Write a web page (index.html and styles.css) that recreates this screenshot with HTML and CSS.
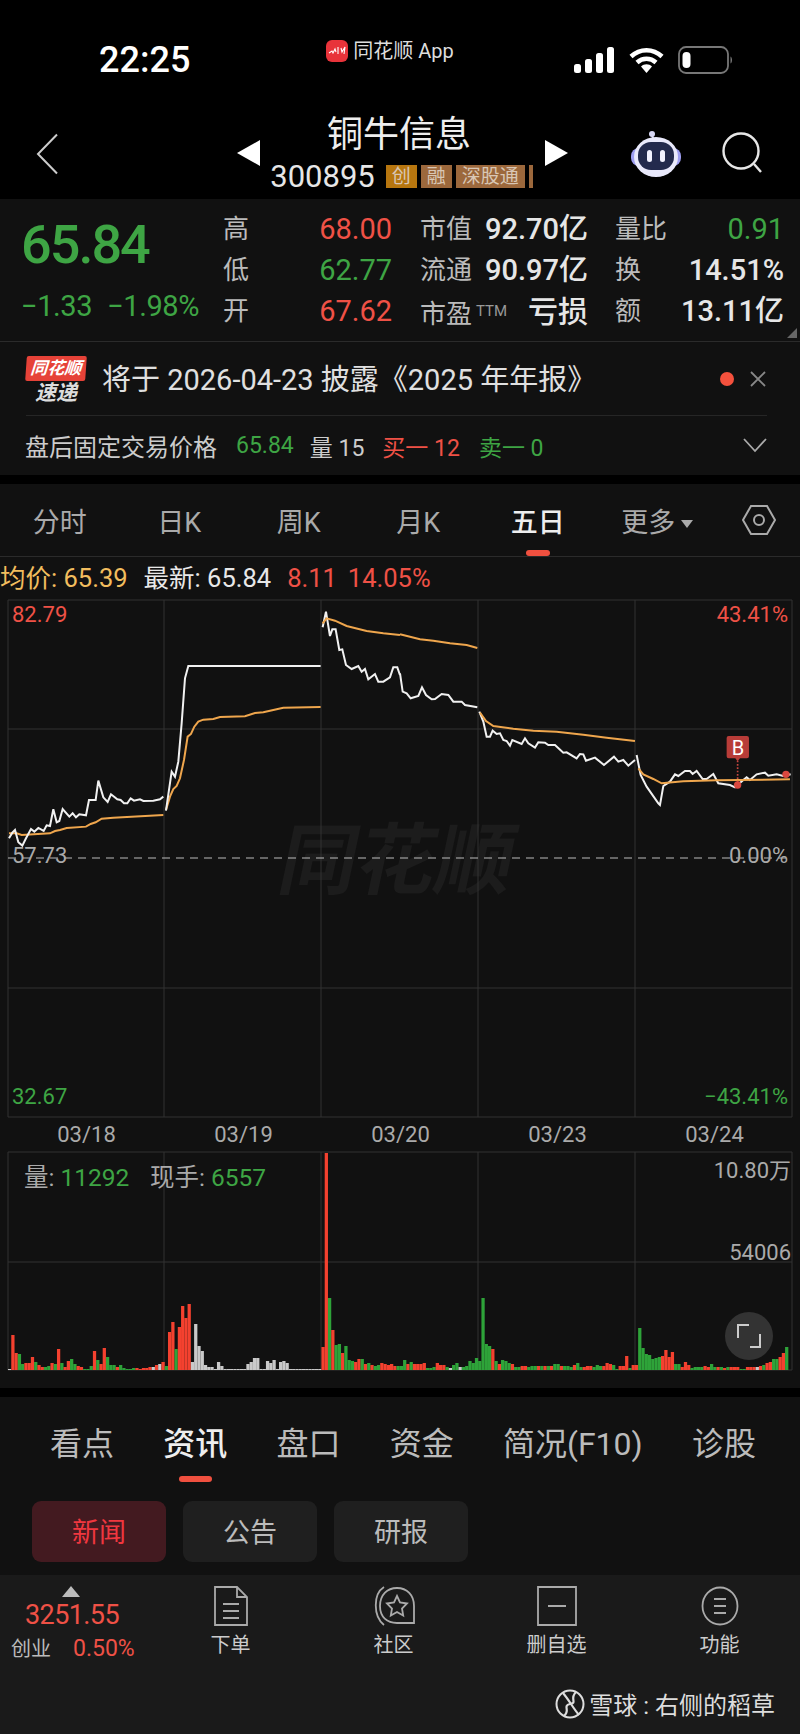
FILE: index.html
```html
<!DOCTYPE html>
<html>
	<head>
		<meta charset="UTF-8">
		<title>铜牛信息</title>
		<link rel="stylesheet" href="styles.css">
	</head>
	<body>
		<div class="phone">
			<div class="status">
				<div class="time">22:25</div>
				<div class="app_name">
					<svg class="app_logo" viewBox="0 0 22 22"><rect width="22" height="22" rx="6" fill="#e8333a"/><path d="M3 13l3-2 1 2 2-4 1 3M12 7v7M15 8l1 4 3-5-1 7" fill="none" stroke="#fff" stroke-width="1.1"/></svg>
					<span>同花顺 App</span>
				</div>
				<div class="status_icons">
					<svg width="40" height="26" viewBox="0 0 40 26"><rect x="0" y="17" width="7" height="9" rx="2.5" fill="#fff"/><rect x="11" y="12" width="7" height="14" rx="2.5" fill="#fff"/><rect x="22" y="6" width="7" height="20" rx="2.5" fill="#fff"/><rect x="33" y="0" width="7" height="26" rx="2.5" fill="#fff"/></svg>
					<svg class="wifi" width="35" height="26" viewBox="0 0 35 26"><path d="M2 9.5C11 1 24 1 33 9.500M8 15.500C13.500 10.500 21.500 10.500 27 15.500" fill="none" stroke="#fff" stroke-width="4.500"/><path d="M12 19.500C15 16.500 20 16.500 23 19.500L17.500 26z" fill="#fff"/></svg>
					<svg class="battery" width="55" height="28" viewBox="0 0 55 28"><rect x="1" y="1" width="49" height="26" rx="7" fill="none" stroke="#777" stroke-width="1.800"/><rect x="4.500" y="6" width="8" height="16" rx="4" fill="#fff"/><path d="M52.500 10.500c2 1 2 6 0 7z" fill="#777"/></svg>
				</div>
			</div>
			<div class="header">
				<svg class="back" width="23" height="42" viewBox="0 0 23 42"><path d="M21 1.500L2 21l19 19.500" fill="none" stroke="#ccc" stroke-width="2"/></svg>
				<div class="stock_box">
					<div class="arrow arrow_left"></div>
					<div class="stock_info">
						<h1>铜牛信息</h1>
						<div class="stock_code">
							<span class="code">300895</span>
							<span class="tag tag_gold">创</span>
							<span class="tag">融</span>
							<span class="tag">深股通</span>
							<span class="tag tag_cut"></span>
						</div>
					</div>
					<div class="arrow arrow_right"></div>
				</div>
				<svg class="robot" width="52" height="48" viewBox="0 0 52 48"><circle cx="22" cy="4" r="3" fill="#d8d8f5"/><path d="M22 6l3 5" stroke="#d8d8f5" stroke-width="2"/><rect x="1" y="18" width="50" height="18" rx="8" fill="#9d9df0"/><ellipse cx="26" cy="27" rx="22" ry="20" fill="#e9e9fb"/><rect x="8" y="12" width="36" height="28" rx="13" fill="#232a4d"/><rect x="17" y="20" width="5" height="12" rx="2.500" fill="#f2f2ff"/><rect x="30" y="20" width="5" height="12" rx="2.500" fill="#f2f2ff"/></svg>
				<svg class="search" width="42" height="42" viewBox="0 0 42 42"><circle cx="20" cy="19" r="17.500" fill="none" stroke="#e6e6e6" stroke-width="2.400"/><path d="M33 32l7 8" stroke="#e6e6e6" stroke-width="2.400"/></svg>
			</div>

			<div class="panel">
				<div class="quote">
					<div class="price_box">
						<div class="price green">65.84</div>
						<div class="change green"><span>−1.33</span><span>−1.98%</span></div>
					</div>
					<div class="quote_grid">
						<span class="q_label">高</span><span class="q_val red">68.00</span>
						<span class="q_label">市值</span><span class="q_val light">92.70亿</span>
						<span class="q_label">量比</span><span class="q_val green">0.91</span>
						<span class="q_label">低</span><span class="q_val green">62.77</span>
						<span class="q_label">流通</span><span class="q_val light">90.97亿</span>
						<span class="q_label">换</span><span class="q_val light">14.51%</span>
						<span class="q_label">开</span><span class="q_val red">67.62</span>
						<span class="q_label">市盈<em>TTM</em></span><span class="q_val light loss">亏损</span>
						<span class="q_label">额</span><span class="q_val light">13.11亿</span>
					</div>
					<div class="corner"></div>
				</div>
				<div class="notice">
					<div class="flash">
						<div class="flash_top">同花顺</div>
						<div class="flash_bottom">速递</div>
					</div>
					<div class="notice_text">将于 2026-04-23 披露《2025 年年报》</div>
					<div class="dot"></div>
					<svg class="close" width="16" height="16" viewBox="0 0 16 16"><path d="M1 1l14 14M15 1L1 15" stroke="#888" stroke-width="1.800"/></svg>
				</div>
				<div class="after_hours">
					<span class="ah_title">盘后固定交易价格</span>
					<span class="green ah_price">65.84</span>
					<span class="ah_vol">量 15</span>
					<span class="red ah_buy">买一 12</span>
					<span class="green">卖一 0</span>
					<svg class="ah_more" width="24" height="15" viewBox="0 0 24 15"><path d="M1 1l11 12L23 1" fill="none" stroke="#aaa" stroke-width="1.800"/></svg>
				</div>
			</div>

			<div class="panel chart_panel">
				<div class="period_tabs">
					<span>分时</span>
					<span>日K</span>
					<span>周K</span>
					<span>月K</span>
					<span class="active_tab">五日</span>
					<span class="more">更多<i></i></span>
					<svg class="hex" width="36" height="32" viewBox="0 0 36 32"><path d="M10 2h16l8 14-8 14H10L2 16z" fill="none" stroke="#aaa" stroke-width="2"/><circle cx="18" cy="16" r="5" fill="none" stroke="#aaa" stroke-width="2"/></svg>
				</div>
				<div class="price_line">
					<span class="orange">均价: 65.39</span>
					<span class="white_text">最新: 65.84</span>
					<span class="red">8.11</span>
					<span class="red pct">14.05%</span>
				</div>

				<svg class="price_chart" width="800" height="524" viewBox="0 596 800 524">
					<text class="mark" x="276" y="888" transform="skewX(-12) translate(188 0)">同花顺</text>
					<path class="grid" d="M8 600H792V1117H8zM164 600V1117M321 600V1117M478 600V1117M635 600V1117M8 729H792M8 988H792"/>
					<path class="dash" d="M8 858H792"/>
					<g transform="translate(0 590) scale(.3333)">
						<polyline class="avg" points="27,730 50,730 65,735 150,730 165,723 180,720 200,714 258,710 272,702 287,697 305,686 340,683 490,675"/>
						<polyline class="avg" points="498,660 510,620 520,597 530,588 540,565 552,510 563,440 573,432 583,410 595,395 610,389 640,387 660,381 735,379 765,369 790,367 820,360 850,353 962,351"/>
						<polyline class="line" points="27,745 37,728 45,720 55,757 67,767 78,745 93,717 103,725 115,714 131,723 140,706 150,708 160,658 170,697 178,693 188,657 208,680 218,670 228,682 238,673 258,676 267,630 287,630 295,572 310,622 323,636 333,613 352,628 362,630 372,640 382,640 392,625 402,632 420,628 430,633 460,632 480,628 490,620"/>
						<polyline class="line" points="498,662 515,545 525,560 535,515 545,400 555,265 565,228 962,228"/>
						<polyline class="line" points="968,112 978,65 990,138 997,118 1007,118 1018,180 1027,178 1038,225 1055,237 1075,228 1085,245 1095,237 1105,268 1125,252 1135,275 1150,275 1170,262 1180,232 1192,232 1200,255"/>
						<polyline class="avg" points="968,100 980,85 1005,92 1040,108 1100,123 1150,130 1200,135"/>
					</g>
					<g transform="translate(400 590) scale(.3333)">
						<polyline class="line" points="0,250 8,305 20,310 32,325 55,318 66,292 78,315 95,328 105,327 125,312 145,315 160,335 185,335 195,345 232,352"/>
						<polyline class="avg" points="0,133 60,148 100,152 150,160 200,165 232,174"/>
						<polyline class="line" points="238,365 250,395 260,440 270,440 278,422 290,432 300,430 310,450 320,453 330,467 337,450 365,462 375,445 385,460 405,473 415,457 435,458 445,465 465,465 490,488 500,487 530,505 540,492 550,493 558,512 585,503 612,525 642,500 655,515 670,510 685,527 705,510"/>
						<polyline class="avg" points="240,368 258,393 280,408 340,416 400,422 470,425 550,434 620,443 705,453"/>
						<polyline class="line" points="710,495 722,555 740,590 775,640 780,645 790,588 810,575 825,553 835,558 855,543 870,543 878,552 890,543 908,567 920,567 940,552 955,580 990,585 1005,592 1030,570 1040,562 1050,570 1070,553 1095,548 1105,557 1130,553 1150,558 1172,553"/>
						<polyline class="avg" points="715,535 730,553 760,567 785,580 850,574 950,571 1170,568"/>
						<path class="trade_link" d="M1013 512V580"/>
						<circle class="trade_dot" cx="1013" cy="585" r="11"/>
						<circle class="trade_dot" cx="1158" cy="553" r="11"/>
						<path class="trade_flag" d="M986 438H1041a6 6 0 0 1 6 6V499a6 6 0 0 1-6 6H1020L1013 514 1006 505H986a6 6 0 0 1-6-6V444a6 6 0 0 1 6-6z"/>
					</g>
					<text class="flag_text" x="738" y="755">B</text>
					<text class="axis red_fill" x="12" y="622">82.79</text>
					<text class="axis end red_fill" x="788" y="622">43.41%</text>
					<text class="axis gray_fill" x="12" y="863">57.73</text>
					<text class="axis end gray_fill" x="788" y="863">0.00%</text>
					<text class="axis green_fill" x="12" y="1104">32.67</text>
					<text class="axis end green_fill" x="788" y="1104">−43.41%</text>
				</svg>

				<div class="dates">
					<span>03/18</span>
					<span>03/19</span>
					<span>03/20</span>
					<span>03/23</span>
					<span>03/24</span>
				</div>

				<svg class="vol_chart" width="800" height="224" viewBox="0 1150 800 224">
					<path class="grid" d="M8 1152H792V1370H8zM164 1152V1370M321 1152V1370M478 1152V1370M635 1152V1370M8 1262H792"/>
					<g id="vol_bars"></g>
					<text class="axis vol_text gray_fill" x="24" y="1186">量: <tspan class="green_fill">11292</tspan></text>
					<text class="axis vol_text gray_fill" x="150" y="1186">现手: <tspan class="green_fill">6557</tspan></text>
					<text class="axis end gray_fill" x="791" y="1178">10.80万</text>
					<text class="axis end gray_fill" x="791" y="1260">54006</text>
					<circle cx="749" cy="1336" r="24" fill="#333"/>
					<path class="expand" d="M738 1338V1325H749M760 1334V1347H750"/>
				</svg>
			</div>

			<div class="panel news_panel">
				<div class="info_tabs">
					<span>看点</span>
					<span class="active_tab">资讯</span>
					<span>盘口</span>
					<span>资金</span>
					<span>简况(F10)</span>
					<span>诊股</span>
				</div>
				<div class="pills">
					<span class="pill active_pill">新闻</span>
					<span class="pill">公告</span>
					<span class="pill">研报</span>
				</div>
			</div>

			<div class="bottom_bar">
				<div class="index_box">
					<div class="index_up"></div>
					<div class="index_val red">3251.55</div>
					<div class="index_row"><span>创业</span><span class="red">0.50%</span></div>
				</div>
				<div class="bar_item">
					<svg width="36" height="40" viewBox="0 0 36 40"><path d="M2 1H24L34 11V39H2zM24 1V11H34M10 18H26M10 25H26M10 32H26" fill="none" stroke="#aaa" stroke-width="1.800"/></svg>
					<span>下单</span>
				</div>
				<div class="bar_item">
					<svg width="44" height="40" viewBox="0 0 44 40"><path d="M12 1C1 8 1 30 12 39" fill="none" stroke="#aaa" stroke-width="1.800"/><path d="M8 20C8 9 15 2 25 2S42 9 42 20V37H25C15 37 8 31 8 20z" fill="none" stroke="#aaa" stroke-width="1.800"/><path d="M25 10l3 6.500 7 1-5 5 1.200 7-6.200-3.500-6.200 3.500 1.200-7-5-5 7-1z" fill="none" stroke="#aaa" stroke-width="1.800"/></svg>
					<span>社区</span>
				</div>
				<div class="bar_item">
					<svg width="40" height="40" viewBox="0 0 40 40"><path d="M1 1H39V39H1zM11 20H29" fill="none" stroke="#aaa" stroke-width="1.800"/></svg>
					<span>删自选</span>
				</div>
				<div class="bar_item">
					<svg width="38" height="40" viewBox="0 0 38 40"><ellipse cx="19" cy="20" rx="17.500" ry="18.500" fill="none" stroke="#aaa" stroke-width="1.800"/><path d="M13 13H25M13 20H25M13 27H25" stroke="#aaa" stroke-width="1.800"/></svg>
					<span>功能</span>
				</div>
				<div class="snowball">
					<svg width="30" height="30" viewBox="0 0 30 30"><circle cx="15" cy="15" r="13.500" fill="none" stroke="#ddd" stroke-width="2"/><path d="M8 4C14 11 18 19 24 26M21 3C14 10 23 14 15 15 7 17 16 21 9 27" fill="none" stroke="#ddd" stroke-width="2.200"/></svg>
					<span>雪球 : 右侧的稻草</span>
				</div>
			</div>
		</div>
		<script src="chart.js"></script>
	</body>
</html>
```

FILE: styles.css
```css
html,body,div,ul,li,h1{margin: 0; padding: 0;}
body{background: #000;}
.phone{
	width: 800px;
	height: 1734px;
	background: #000;
	color: #ddd;
	font-family: Roboto, "Noto Sans CJK SC", sans-serif;
	overflow: hidden;
}
.red{color: #ef5146;}
.green{color: #3ea544;}
.orange{color: #f2bd5e;}
.white_text{color: #e8e8e8;}
.light{color: #e6e6e6;}

/* 状态栏 */
.status{
	height: 100px;
	position: relative;
	display: flex;
	align-items: flex-start;
}
.time{
	margin: 40px 0 0 99px;
	font-size: 36px;
	line-height: 40px;
	font-weight: 500;
	color: #fff;
}
.app_name{
	display: flex;
	align-items: center;
	margin: 39px 0 0 136px;
	font-size: 20px;
	line-height: 24px;
	color: #ddd;
}
.app_logo{width: 22px; height: 22px; margin-right: 5px;}
.status_icons{
	display: flex;
	align-items: center;
	margin: 46px 0 0 120px;
}
.wifi{margin-left: 15px;}
.battery{margin-left: 14px;}

/* 顶部标题 */
.header{
	height: 99px;
	display: flex;
	align-items: flex-start;
	position: relative;
}
.back{margin: 33px 0 0 36px;}
.stock_box{
	width: 331px;
	margin: 14px 0 0 178px;
	display: flex;
	align-items: center;
	justify-content: space-between;
	height: 76px;
}
.arrow{
	width: 0;
	height: 0;
	margin-top: 2px;
	border-top: 13px solid transparent;
	border-bottom: 13px solid transparent;
}
.arrow_left{border-right: 23px solid #fff;}
.arrow_right{border-left: 23px solid #fff;}
.stock_info{
	display: flex;
	flex-direction: column;
	align-items: center;
	margin-left: -3px;
}
.stock_info h1{
	margin-left: -4px;
	font-size: 36px;
	line-height: 42px;
	font-weight: 400;
	color: #eee;
}
.stock_code{
	display: flex;
	align-items: center;
	height: 28px;
	margin-top: 6px;
	margin-left: 1px;
}
.code{font-size: 31px; color: #e6e6e6; margin-right: 11px;}
.tag{
	height: 23px;
	line-height: 23px;
	padding: 0 6px;
	margin-right: 4px;
	font-size: 19px;
	color: #d9c7b5;
	background: #9c683c;
}
.tag_gold{background: #b7760f;}
.tag_cut{width: 4px; padding: 0; margin-right: 0;}
.robot{margin: 30px 0 0 62px;}
.search{margin: 32px 0 0 39px;}

.panel{background: #111;}

/* 行情 */
.quote{
	height: 142px;
	display: flex;
	position: relative;
	border-bottom: 1px solid #2b2b2b;
}
.price_box{width: 223px; padding-left: 21px; box-sizing: border-box;}
.price{
	margin-top: 18px;
	font-size: 54px;
	line-height: 56px;
	letter-spacing: -2px;
	font-weight: 500;
}
.change{
	display: flex;
	gap: 15px;
	margin-top: 17px;
	font-size: 29px;
	line-height: 32px;
	letter-spacing: -.4px;
}
.quote_grid{
	display: grid;
	grid-template-columns: 80px 89px 82px 114px 80px 116px;
	grid-auto-rows: 41px;
	margin-top: 10px;
}
.q_label{font-size: 26px; line-height: 41px; color: #bbb; white-space: nowrap;}
.q_label:nth-child(6n+3){padding-left: 28px;}
.q_label:nth-child(6n+5){padding-left: 27px;}
.q_label em{font-style: normal; font-size: 15px; color: #999; margin-left: 4px; vertical-align: 7px;}
.q_val{font-size: 29px; line-height: 41px; text-align: right; white-space: nowrap;}
.q_val.light{font-weight: 500;}
.loss{font-size: 30px;}
.corner{
	position: absolute;
	right: 3px;
	bottom: 3px;
	width: 0;
	height: 0;
	border-left: 10px solid transparent;
	border-bottom: 10px solid #666;
}

/* 公告 */
.notice{
	height: 73px;
	margin: 0 33px 0 26px;
	display: flex;
	align-items: center;
	border-bottom: 1px solid #262626;
}
.flash{width: 60px; margin-top: 4px; font-style: italic; font-weight: 700; text-align: center;}
.flash_top{
	height: 25px;
	line-height: 25px;
	font-size: 17px;
	color: #fff;
	background: #e64238;
	border-radius: 2px;
	transform: skewX(-4deg);
}
.flash_bottom{font-size: 21px; line-height: 25px; color: #ddd;}
.notice_text{
	flex: 1;
	margin: -4px 0 0 16px;
	font-size: 29px;
	color: #e0e0e0;
	white-space: nowrap;
}
.dot{width: 14px; height: 14px; border-radius: 50%; background: #f4513d; margin-right: 16px;}
.close{margin-right: 1px;}

.after_hours{
	height: 59px;
	padding: 0 33px 0 25px;
	display: flex;
	align-items: center;
	font-size: 23px;
	color: #ccc;
}
.ah_title{font-size: 24px; margin-right: 19px;}
.ah_price{margin-right: 16px;}
.ah_vol{margin-right: 18px;}
.ah_buy{margin-right: 19px;}
.ah_more{margin-left: auto;}

/* 图表区 */
.chart_panel{margin-top: 9px; height: 904px;}
.period_tabs{
	height: 72px;
	display: grid;
	grid-template-columns: repeat(6, 119.5px) 83px;
	align-items: center;
	justify-items: center;
	font-size: 27px;
	color: #aaa;
	border-bottom: 1px solid #2b2b2b;
}
.period_tabs span{position: relative;}
.period_tabs .active_tab{color: #eee; font-weight: 500;}
.active_tab::after{
	content: "";
	position: absolute;
	left: 50%;
	bottom: -16px;
	width: 24px;
	height: 6px;
	margin-left: -12px;
	border-radius: 3px;
	background: #f0503f;
}
.more i{
	display: inline-block;
	margin-left: 6px;
	vertical-align: 4px;
	border-left: 6px solid transparent;
	border-right: 6px solid transparent;
	border-top: 8px solid #aaa;
}
.hex{margin-left: 1px;}
.price_line{
	height: 39px;
	line-height: 42px;
	font-size: 25.500px;
	display: flex;
	gap: 16px;
	white-space: nowrap;
}
.price_line .pct{margin-left: -5px;}
.price_chart,.vol_chart{display: block;}
.grid{fill: none; stroke: #333; stroke-width: 1;}
.dash{stroke: #bbb; stroke-width: 1.2; stroke-dasharray: 8 6;}
.line{fill: none; stroke: #f1f1f1; stroke-width: 6;}
.avg{fill: none; stroke: #efa64d; stroke-width: 6;}
.trade_link{stroke: #c4453f; stroke-width: 5; stroke-dasharray: 5 5;}
.trade_dot{fill: #d9483f;}
.trade_flag{fill: #b83c38;}
.flag_text{font-size: 20px; fill: #fff; text-anchor: middle;}
.mark{font-size: 78px; font-weight: 700; fill: #1c1c1c;}
.axis{font-size: 22px;}
.vol_text{font-size: 24.500px;}
.end{text-anchor: end;}
.red_fill{fill: #ef5146;}
.green_fill{fill: #3ea544;}
.gray_fill{fill: #aaa;}
.expand{fill: none; stroke: #ccc; stroke-width: 2;}
.dates{
	height: 30px;
	display: grid;
	grid-template-columns: repeat(5, 157px);
	padding-left: 8px;
	justify-items: center;
	font-size: 22px;
	line-height: 30px;
	color: #aaa;
}

/* 资讯 */
.news_panel{margin-top: 9px; height: 178px;}
.info_tabs{
	height: 87px;
	padding: 0 44px 0 50px;
	display: flex;
	justify-content: space-between;
	align-items: center;
	font-size: 32px;
	color: #bbb;
}
.info_tabs span{position: relative;}
.info_tabs .active_tab{color: #eee; font-weight: 500;}
.info_tabs .active_tab::after{width: 33px; margin-left: -16px; bottom: -18px;}
.pills{display: flex; gap: 17px; padding: 17px 0 0 32px;}
.pill{
	width: 134px;
	height: 61px;
	line-height: 65px;
	text-align: center;
	font-size: 27px;
	color: #bbb;
	background: #1f1f1f;
	border-radius: 9px;
}
.active_pill{color: #f0373f; background: #431a20;}

/* 底部栏 */
.bottom_bar{
	height: 159px;
	background: #1a1a1a;
	display: grid;
	grid-template-columns: 149px repeat(4, 163px);
	position: relative;
}
.index_box{padding: 11px 0 0 11px;}
.index_up{
	width: 0;
	height: 0;
	margin-left: 51px;
	border-left: 9px solid transparent;
	border-right: 9px solid transparent;
	border-bottom: 11px solid #bbb;
}
.index_val{font-size: 27px; line-height: 30px; margin: 3px 0 0 14px; letter-spacing: -.6px;}
.index_row{display: flex; gap: 22px; font-size: 20px; line-height: 30px; margin-top: 4px; color: #bbb;}
.index_row .red{font-size: 23px;}
.bar_item{
	display: flex;
	flex-direction: column;
	align-items: center;
	padding-top: 11px;
	font-size: 20px;
	line-height: 26px;
	color: #ccc;
}
.bar_item span{margin-top: 6px;}
.snowball{
	position: absolute;
	right: 25px;
	bottom: 13px;
	display: flex;
	align-items: center;
	gap: 4px;
	font-size: 24px;
	color: #ddd;
	white-space: nowrap;
}
```

FILE: chart.js
```js
// 成交量数据: r红 g绿 w白 + 柱高
var volData = "w1 r35 r17 g16 g6 r7 r7 r13 g8 r5 r3 g3 g4 r7 g6 r21 g7 r3 r9 g11 g6 r4 r3 g1 g1 g4 r19 g10 r6 r22 g13 g5 g5 r3 g5 g2 g1 g1 g2 r2 r1 r2 r2 r3 w3 r5 w6 r8 " +
	"g4 r38 r48 g21 r43 r64 r52 r66 w8 w46 w24 w19 w5 w3 w3 w1 w8 w4 w1 w1 w1 w1 w1 w1 w1 w6 w8 w12 w12 w1 w1 w9 w7 w10 w1 w8 w9 w7 w1 w1 w1 w1 w1 w1 w1 w1 w1 w1 " +
	"r23 r217 g72 r40 g25 g26 r17 g24 g10 g9 r8 r11 g11 r6 g7 r5 g4 g5 r7 r6 r5 r6 r4 g4 g4 g10 r6 g8 r6 r6 r6 r7 g2 g2 g3 r7 r5 r5 g3 w2 g5 g7 w3 g3 g4 g9 g7 g12 g9 " +
	"g72 g26 g24 r21 g9 r6 g10 g9 g7 r6 g3 g3 r4 r4 g3 g4 g4 r4 g4 r4 g4 r4 g6 g6 r4 g4 g4 g3 r5 g7 g3 r3 r4 r4 g3 g5 g4 r4 r7 r6 g5 g1 r4 r4 r14 g2 r5 r5 " +
	"g42 g22 g16 g15 g11 g12 g13 r14 r20 r13 r18 g6 g6 r3 r8 r5 g2 g3 g3 g3 r4 r3 g6 g3 r3 g3 r2 g3 r3 r3 r3 g1 g1 r3 r3 r3 w3 r4 g5 r7 r8 g11 g11 r13 r17 g23";
var oBars = document.getElementById("vol_bars");
var aBars = volData.split(" ");
var colors = {r: "#f4412f", g: "#2ea339", w: "#c9c9c9"};
for (var i = 0; i < aBars.length; i++) {
	var h = parseInt(aBars[i].substring(1));
	var rect = document.createElementNS("http://www.w3.org/2000/svg", "rect");
	rect.setAttribute("x", 8 + i * 3.265);
	rect.setAttribute("y", 1370 - h);
	rect.setAttribute("width", 3.265);
	rect.setAttribute("height", h);
	rect.setAttribute("fill", colors[aBars[i].charAt(0)]);
	oBars.appendChild(rect);
}
```
